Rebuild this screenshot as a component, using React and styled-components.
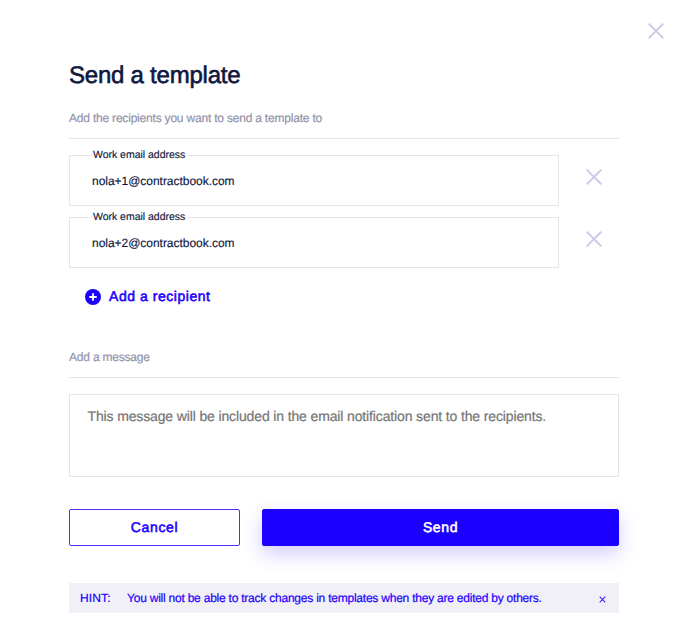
import React from "react";
import styled, { createGlobalStyle, css } from "styled-components";

const GlobalStyle = createGlobalStyle`
  * { box-sizing: border-box; }
  body {
    margin: 0;
    background: #fff;
    color: #10183f;
    font-family: "Liberation Sans", Arial, sans-serif;
    text-rendering: geometricPrecision;
  }
  button, input, textarea { font-family: inherit; text-rendering: inherit; }
`;

const Dialog = styled.main`
  width: 688px;
  height: 632px;
  padding: 23px 24px 0 69px;
  overflow: hidden;
`;

const TopBar = styled.header`
  display: flex;
  justify-content: flex-end;
  height: 16px;
`;

const Content = styled.div`
  width: 550px;
`;

const Title = styled.h1`
  margin: 23px 0 0;
  font-size: 24px;
  line-height: 28px;
  font-weight: 400;
  letter-spacing: -0.23px;
  -webkit-text-stroke: 0.6px currentColor;
`;

const SectionLabel = styled.p`
  margin: 0;
  padding-top: ${(p) => p.$space}px;
  height: ${(p) => p.$height}px;
  border-bottom: 1px solid #e3e3e8;
  color: #9393a9;
  font-size: 12px;
  line-height: 16px;
  letter-spacing: -0.2px;
  -webkit-text-stroke: 0.2px currentColor;
`;

const Recipients = styled.div`
  display: flex;
  flex-direction: column;
  gap: 11px;
  margin-top: 16px;
`;

const RecipientRow = styled.div`
  display: flex;
  align-items: center;
  height: 51px;
`;

const Field = styled.label`
  display: block;
  width: 490px;
  height: 51px;
  padding: 0 22px;
  border: 1px solid #e6e6e6;
`;

const FieldName = styled.span`
  display: block;
  width: 96px;
  height: 12px;
  margin: -8px 0 0;
  padding-left: 1px;
  background: #fff;
  font-size: 10.5px;
  line-height: 14px;
  white-space: nowrap;
  letter-spacing: -0.02px;
  -webkit-text-stroke: 0.15px currentColor;
`;

const FieldValue = styled.span`
  display: block;
  margin-top: 13px;
  font-size: 12px;
  line-height: 16px;
  letter-spacing: -0.03px;
  -webkit-text-stroke: 0.15px currentColor;
`;

const IconButton = styled.button`
  display: flex;
  padding: 0;
  border: 0;
  background: none;
  color: ${(p) => p.$color || "#cfcde8"};
  margin: ${(p) => p.$margin || "0"};
`;

const AddButton = styled.button`
  display: flex;
  align-items: center;
  gap: 8px;
  height: 18px;
  margin: 20px 0 0 16px;
  padding: 0;
  border: 0;
  background: none;
  color: #1c00ff;
  font-size: 14px;
  line-height: 18px;
  letter-spacing: 0.54px;
  -webkit-text-stroke: 0.55px currentColor;
`;

const AddLabel = styled.span`
  padding-bottom: 2px;
`;

const Message = styled.textarea`
  display: block;
  width: 100%;
  height: 83px;
  margin-top: 16px;
  padding: 12px 17.5px;
  border: 1px solid #e3e3e9;
  resize: none;
  font-size: 14px;
  line-height: 18px;
  letter-spacing: -0.135px;
  &::placeholder { color: #757575; -webkit-text-stroke: 0.2px currentColor; }
`;

const Actions = styled.div`
  display: grid;
  grid-template-columns: 171px 1fr;
  gap: 22px;
  margin-top: 32px;
`;

const Button = styled.button`
  height: 36.5px;
  padding: 0 0 1px;
  border: 1px solid #4a33ff;
  border-radius: 2px;
  background: #fff;
  color: #1c00ff;
  font-size: 14px;
  letter-spacing: 0.62px;
  -webkit-text-stroke: 0.55px currentColor;
  ${(p) => p.$primary && css`
    border-color: #1c00ff;
    background: #1c00ff;
    color: #fff;
    box-shadow: 0 8px 20px rgba(28, 0, 255, 0.2);
  `}
`;

const Hint = styled.aside`
  display: flex;
  align-items: center;
  height: 30px;
  margin-top: 37.5px;
  padding: 0 13px 0 11px;
  background: #f1f0f6;
  color: #1c00ff;
  font-size: 12px;
  -webkit-text-stroke: 0.2px currentColor;
`;

const HintName = styled.span`
  width: 47px;
  letter-spacing: 0.15px;
`;

const HintText = styled.span`
  flex: 1;
  letter-spacing: -0.225px;
`;

const Cross = ({ size = 16, stroke = 2 }) => (
  <svg width={size} height={size} viewBox={`0 0 ${size} ${size}`} fill="none">
    <path d={`M.7.7 ${size - 0.7} ${size - 0.7}M${size - 0.7}.7.7 ${size - 0.7}`} stroke="currentColor" strokeWidth={stroke} />
  </svg>
);

const PlusCircle = () => (
  <svg width="16" height="16" viewBox="0 0 16 16">
    <circle cx="8" cy="8" r="8" fill="currentColor" />
    <path d="M8 4.3v7.4M4.3 8h7.4" stroke="#fff" strokeWidth="1.8" />
  </svg>
);

export default function App() {
  return (
    <>
      <GlobalStyle />
      <Dialog>
        <TopBar>
          <IconButton aria-label="Close"><Cross /></IconButton>
        </TopBar>
        <Content>
          <Title>Send a template</Title>
          <SectionLabel $space={20} $height={49}>Add the recipients you want to send a template to</SectionLabel>
          <Recipients>
            {["nola+1@contractbook.com", "nola+2@contractbook.com"].map((email) => (
              <RecipientRow key={email}>
                <Field>
                  <FieldName>Work email address</FieldName>
                  <FieldValue>{email}</FieldValue>
                </Field>
                <IconButton aria-label="Remove" $margin="0 0 7px 27px"><Cross /></IconButton>
              </RecipientRow>
            ))}
          </Recipients>
          <AddButton><PlusCircle /><AddLabel>Add a recipient</AddLabel></AddButton>
          <SectionLabel $space={43} $height={72}>Add a message</SectionLabel>
          <Message placeholder="This message will be included in the email notification sent to the recipients." />
          <Actions>
            <Button>Cancel</Button>
            <Button $primary>Send</Button>
          </Actions>
          <Hint>
            <HintName>HINT:</HintName>
            <HintText>You will not be able to track changes in templates when they are edited by others.</HintText>
            <IconButton aria-label="Dismiss" $color="#3a20ff" $margin="2px 0 0"><Cross size={7} stroke={1.1} /></IconButton>
          </Hint>
        </Content>
      </Dialog>
    </>
  );
}
